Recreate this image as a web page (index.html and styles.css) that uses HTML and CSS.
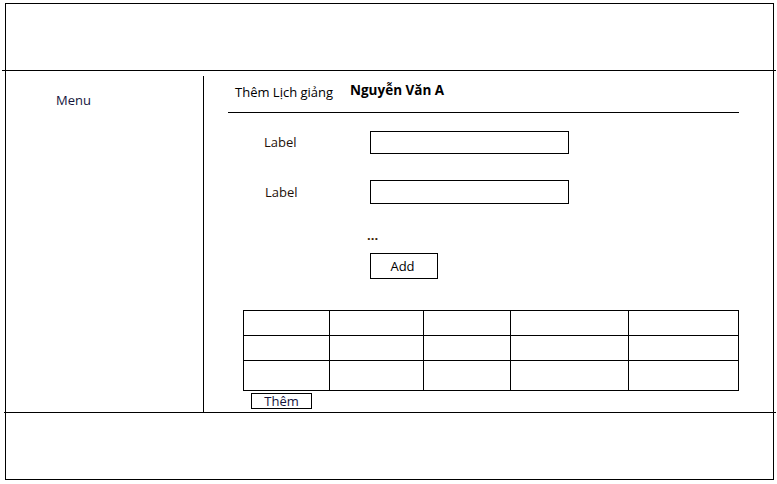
FILE: index.html
```html
<!DOCTYPE html>
<html lang="vi">
<head>
<meta charset="utf-8">
<title>Thêm Lịch giảng</title>
<link rel="stylesheet" href="styles.css">
</head>
<body>
<div class="frame">
  <header class="header"></header>
  <div class="rule"></div>
  <div class="main">
    <aside class="sidebar"><span class="menu">Menu</span></aside>
    <section class="content">
      <div class="title-row">
        <span class="title">Thêm Lịch giảng</span>
        <span class="user">Nguyễn Văn A</span>
      </div>
      <div class="underline"></div>
      <div class="form-row row1">
        <span class="label">Label</span>
        <span class="input"></span>
      </div>
      <div class="form-row row2">
        <span class="label">Label</span>
        <span class="input"></span>
      </div>
      <div class="dots">...</div>
      <div class="add-wrap"><span class="btn-add">Add</span></div>
      <table class="grid">
        <colgroup>
          <col class="c1"><col class="c2"><col class="c3"><col class="c4"><col class="c5">
        </colgroup>
        <tr class="r1"><td></td><td></td><td></td><td></td><td></td></tr>
        <tr class="r2"><td></td><td></td><td></td><td></td><td></td></tr>
        <tr class="r3"><td></td><td></td><td></td><td></td><td></td></tr>
      </table>
      <div class="them-wrap"><span class="btn-them">Thêm</span></div>
    </section>
  </div>
  <div class="rule foot-rule"></div>
  <footer class="footer"></footer>
</div>
</body>
</html>
```
FILE: styles.css
```css
* { box-sizing: border-box; }
html, body { margin: 0; padding: 0; background: #fff; }
body {
  font-family: "Open Sans", "Noto Sans", "DejaVu Sans", sans-serif;
  font-size: 13px;
  color: #000;
}
.frame {
  margin: 3px 0 0 5px;
  width: 769px;
  height: 477px;
  border: 1px solid #000;
  display: flex;
  flex-direction: column;
}
.header { height: 66px; flex: none; }
.rule {
  height: 1px;
  background: #000;
  margin: 0 -3px 0 -4px;
  flex: none;
}
.foot-rule { margin: 0 -3px 0 -2px; }
.main {
  flex: none;
  height: 341px;
  display: flex;
}
.sidebar {
  width: 198px;
  flex: none;
  margin-top: 5px;
  border-right: 1px solid #000;
  padding: 15px 0 0 50px;
}
.menu { color: #14143c; line-height: 18px; }
.content {
  flex: 1;
  padding: 11px 0 0 24px;
  display: flex;
  flex-direction: column;
}
.title-row {
  display: flex;
  align-items: center;
  height: 18px;
  padding-left: 7px;
}
.title { width: 115px; line-height: 18px; position: relative; top: 1px; }
.user { font-weight: 700; font-size: 13.5px; line-height: 18px; position: relative; top: -1px; }
.underline {
  width: 511px;
  height: 1px;
  background: #000;
  margin-top: 12px;
}
.form-row {
  display: flex;
  align-items: center;
  padding-left: 36px;
}
.row1 { margin-top: 18px; }
.row2 { margin-top: 26px; }
.label { width: 106px; color: #1e1008; position: relative; top: -1px; }
.row2 .label { padding-left: 1px; top: 0; }
.input {
  width: 199px;
  height: 23px;
  border: 1px solid #000;
}
.row2 .input { height: 24px; }
.dots {
  margin: 23px 0 0 139px;
  line-height: 16px;
  height: 16px;
  color: #3a1e00;
  font-weight: 700;
}
.add-wrap { padding-left: 142px; margin-top: 10px; }
.btn-add {
  display: flex;
  align-items: center;
  justify-content: center;
  width: 68px;
  height: 26px;
  border: 1px solid #000;
  padding-right: 3px;
}
.grid {
  margin: 31px 0 0 15px;
  border-collapse: collapse;
  width: 496px;
  table-layout: fixed;
}
.grid td { border: 1px solid #000; padding: 0; }
.c1 { width: 86px; }
.c2 { width: 94px; }
.c3 { width: 87px; }
.c4 { width: 118px; }
.c5 { width: 110px; }
.r1 td, .r2 td { height: 25px; }
.r3 td { height: 30px; }
.them-wrap { padding-left: 23px; margin-top: 2px; }
.btn-them {
  display: flex;
  align-items: center;
  justify-content: center;
  width: 61px;
  height: 16px;
  border: 1px solid #000;
  color: #14143c;
  line-height: 14px;
}
.footer { flex: 1; }
```
